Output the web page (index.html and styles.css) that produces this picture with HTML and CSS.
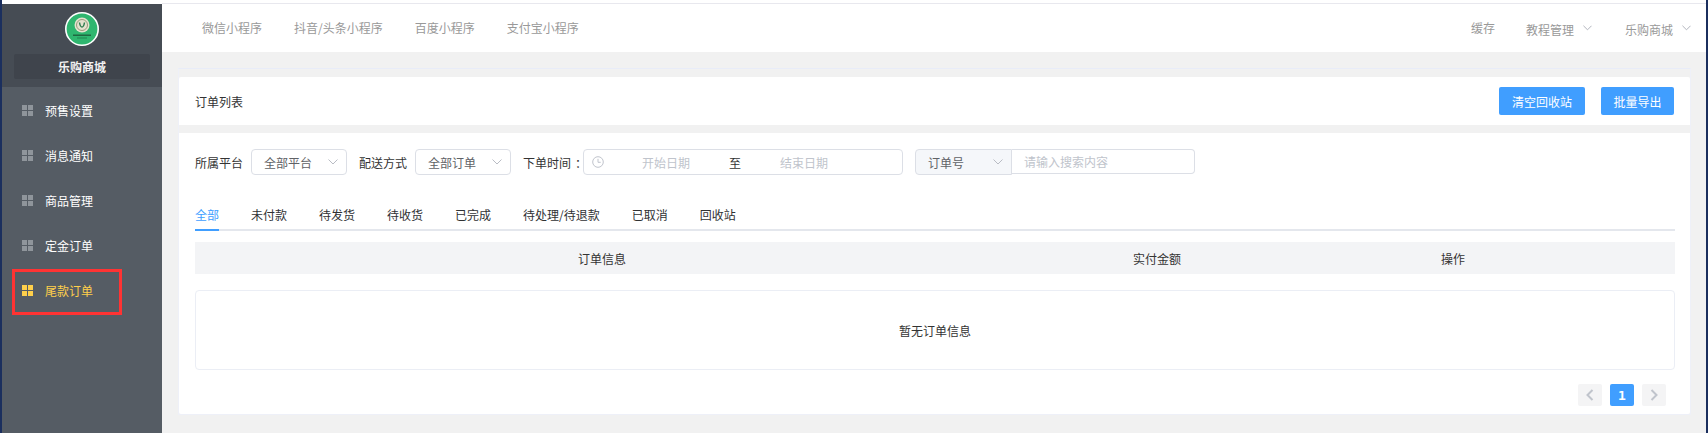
FILE: index.html
```html
<!DOCTYPE html>
<html lang="zh">
<head>
<meta charset="utf-8">
<title>尾款订单</title>
<link rel="stylesheet" href="styles.css">
</head>
<body>
<div class="app">
  <aside class="sidebar">
    <div class="brand">
      <svg class="logo" viewBox="0 0 34 34" width="34" height="34">
        <circle cx="17" cy="17" r="16.2" fill="#2fb66f" stroke="#fff" stroke-width="1.6"/>
        <circle cx="17" cy="13" r="7.500" fill="#e4e2cf"/>
        <circle cx="17" cy="13" r="5.500" fill="none" stroke="#9a9a7c" stroke-width="1"/>
        <path d="M14.500 10.500c.5 3 1.500 4.500 2.500 4.500s2-1.500 2.500-4.500" fill="none" stroke="#2f7d4f" stroke-width="1.500"/>
        <rect x="8" y="22.500" width="18" height="1.500" fill="#1c5a3a" opacity=".85"/>
        <rect x="12" y="25.500" width="10" height="1" fill="#1c7a4a" opacity=".8"/>
      </svg>
      <div class="brand-name">乐购商城</div>
    </div>
    <nav class="menu">
      <a class="menu-item"><span class="grid-icon"><i></i><i></i><i></i><i></i></span>预售设置</a>
      <a class="menu-item"><span class="grid-icon"><i></i><i></i><i></i><i></i></span>消息通知</a>
      <a class="menu-item"><span class="grid-icon"><i></i><i></i><i></i><i></i></span>商品管理</a>
      <a class="menu-item"><span class="grid-icon"><i></i><i></i><i></i><i></i></span>定金订单</a>
      <a class="menu-item active"><span class="grid-icon"><i></i><i></i><i></i><i></i></span>尾款订单<span class="annotation"></span></a>
    </nav>
  </aside>
  <main class="main">
    <header class="topbar">
      <nav class="top-links">
        <a>微信小程序</a><a>抖音/头条小程序</a><a>百度小程序</a><a>支付宝小程序</a>
      </nav>
      <div class="top-right">
        <a class="cache">缓存</a>
        <a class="drop">教程管理<svg class="chev" viewBox="0 0 10 6" width="9" height="6"><path d="M.5.5 5 5 9.500.5"/></svg></a>
        <a class="drop">乐购商城<svg class="chev" viewBox="0 0 10 6" width="9" height="6"><path d="M.5.5 5 5 9.500.5"/></svg></a>
      </div>
    </header>
    <div class="content">
      <section class="frame">
        <div class="title-card">
          <span class="title">订单列表</span>
          <div class="actions">
            <button class="btn">清空回收站</button>
            <button class="btn">批量导出</button>
          </div>
        </div>
        <div class="list-card">
          <div class="filters">
            <label class="lbl">所属平台</label>
            <div class="select"><span>全部平台</span><svg class="chev" viewBox="0 0 10 6" width="10" height="6"><path d="M.5.5 5 5 9.500.5"/></svg></div>
            <label class="lbl">配送方式</label>
            <div class="select"><span>全部订单</span><svg class="chev" viewBox="0 0 10 6" width="10" height="6"><path d="M.5.5 5 5 9.500.5"/></svg></div>
            <label class="lbl lbl-time">下单时间<span class="colon">：</span></label>
            <div class="date">
              <svg class="clock" viewBox="0 0 12 12" width="12" height="12"><circle cx="6" cy="6" r="5.300"/><path d="M6 2.800V6.300H8.700"/></svg>
              <span class="ph">开始日期</span><span class="sep">至</span><span class="ph">结束日期</span>
            </div>
            <div class="search">
              <div class="search-type"><span>订单号</span><svg class="chev" viewBox="0 0 10 6" width="10" height="6"><path d="M.5.5 5 5 9.500.5"/></svg></div>
              <div class="search-input">请输入搜索内容</div>
            </div>
          </div>
          <div class="tabs">
            <a class="tab on">全部</a><a class="tab">未付款</a><a class="tab">待发货</a><a class="tab">待收货</a><a class="tab">已完成</a><a class="tab">待处理/待退款</a><a class="tab">已取消</a><a class="tab">回收站</a>
          </div>
          <div class="thead">
            <span>订单信息</span><span>实付金额</span><span>操作</span>
          </div>
          <div class="empty">暂无订单信息</div>
          <div class="pager">
            <a class="page-btn"><svg viewBox="0 0 8 12" width="8" height="12"><path d="M6.500 1 1.500 6l5 5"/></svg></a>
            <a class="page-btn current">1</a>
            <a class="page-btn"><svg viewBox="0 0 8 12" width="8" height="12"><path d="M1.500 1l5 5-5 5"/></svg></a>
          </div>
        </div>
      </section>
    </div>
  </main>
</div>
</body>
</html>
```
FILE: styles.css
```css
* { box-sizing: border-box; }
html, body { margin: 0; padding: 0; height: 100%; }
body {
  font-family: "Noto Sans CJK SC", "Liberation Sans", sans-serif;
  font-size: 12px;
  color: #333;
  background: #fff;
  overflow: hidden;
}
a { color: inherit; text-decoration: none; }

.app {
  display: flex;
  width: 1708px;
  height: 433px;
  border-left: 2px solid #1b2f5e;
  border-right: 2px solid #1b2f5e;
  position: relative;
}

.sidebar {
  flex: 0 0 160px;
  margin-top: 4px;
  background: #555c64;
  display: flex;
  flex-direction: column;
}
.brand {
  height: 83px;
  background: #464c54;
  padding: 8px 12px 0;
  display: flex;
  flex-direction: column;
  align-items: center;
}
.logo { display: block; }
.brand-name {
  width: 136px;
  height: 25px;
  margin-top: 8px;
  background: #3f444c;
  border-radius: 2px;
  color: #f2f2f2;
  font-weight: 700;
  line-height: 25px;
  text-align: center;
}
.menu { padding-top: 1px; }
.menu-item {
  display: flex;
  align-items: center;
  height: 45px;
  padding-left: 20px;
  color: #fff;
  position: relative;
}
.grid-icon {
  display: grid;
  grid-template-columns: 5px 5px;
  grid-auto-rows: 5px;
  gap: 1px;
  width: 11px;
  margin-right: 12px;
}
.grid-icon i { background: #8f959b; }
.menu-item.active { color: #ffd04b; }
.menu-item.active .grid-icon i { background: #ffd04b; }
.annotation {
  position: absolute;
  left: 10px;
  top: 1px;
  width: 110px;
  height: 46px;
  border: 3px solid #f33;
}

.main {
  flex: 1;
  display: flex;
  flex-direction: column;
  background: #f1f1f1;
  border-top: 3px solid #fff;
  min-width: 0;
}
.topbar {
  height: 49px;
  background: #fff;
  border-top: 1px solid #e8e8ee;
  display: flex;
  justify-content: space-between;
  align-items: center;
  padding: 0 15px 0 40px;
  color: #999;
}
.top-links { display: flex; gap: 32px; padding-bottom: 2px; }
.top-right { display: flex; align-items: center; padding-top: 2px; }
.cache { margin-right: 31px; padding-bottom: 4px; }
.drop { display: flex; align-items: center; }
.drop + .drop { margin-left: 33px; }
.top-right .chev { margin-left: 9px; margin-bottom: 3px; stroke: #a9adb5; }
.chev { fill: none; stroke: #b9bcc4; stroke-width: 1; display: block; }

.content { flex: 1; padding: 16px 15px 0 16px; }
.frame {
  border: 1px solid #eef0f8;
  border-top-color: #e8ecf8;
  padding-top: 8px;
}
.title-card {
  height: 48px;
  background: #fff;
  border-radius: 2px 2px 0 0;
  display: flex;
  justify-content: space-between;
  align-items: center;
  padding: 0 16px;
}
.actions { display: flex; gap: 16px; }
.btn {
  height: 28px;
  border: 0;
  border-radius: 2px;
  padding: 0 13px;
  background: #409eff;
  color: #fff;
  font: inherit;
}
.btn + .btn { padding: 0 12.500px; }
.list-card {
  margin-top: 8px;
  height: 281px;
  background: #fff;
  border-radius: 0 0 2px 2px;
  padding: 16px 15px 0 16px;
}

.filters { display: flex; align-items: center; height: 26px; }
.lbl { margin-right: 8px; }
.lbl-time { margin-right: 0; }
.colon { display: inline-block; padding-left: 4px; margin-right: -4px; }
.select {
  width: 96px;
  height: 26px;
  border: 1px solid #dcdfe6;
  border-radius: 4px;
  display: flex;
  align-items: center;
  justify-content: space-between;
  padding: 0 8px 0 12px;
  margin-right: 12px;
  color: #606266;
}
.date {
  width: 320px;
  height: 26px;
  border: 1px solid #dcdfe6;
  border-radius: 4px;
  display: flex;
  align-items: center;
  padding-left: 8px;
  color: #c0c4cc;
  margin-right: 12px;
}
.clock { fill: none; stroke: #c0c4cc; stroke-width: 1; flex: none; }
.ph { flex: none; width: 48px; }
.date .ph:first-of-type { margin-left: 38px; }
.sep { color: #333; margin: 0 0 0 39px; }
.sep + .ph { margin-left: 39px; }
.search { display: flex; align-items: flex-start; height: 26px; }
.search-type {
  width: 97px;
  height: 26px;
  background: #f5f7fa;
  border: 1px solid #dcdfe6;
  border-radius: 4px 0 0 4px;
  display: flex;
  align-items: center;
  justify-content: space-between;
  padding: 0 8px 0 12px;
  color: #606266;
}
.search-input {
  width: 183px;
  height: 25px;
  border: 1px solid #dcdfe6;
  border-left: 0;
  border-radius: 0 4px 4px 0;
  padding-left: 12px;
  line-height: 23px;
  color: #c0c4cc;
}

.tabs {
  display: flex;
  gap: 32px;
  height: 33px;
  margin-top: 23px;
  border-bottom: 2px solid #e4e7ed;
}
.tab { height: 33px; line-height: 33px; color: #303133; }
.tab.on { color: #409eff; border-bottom: 2px solid #409eff; }

.thead {
  margin-top: 11px;
  height: 32px;
  background: #f3f4f6;
  display: grid;
  grid-template-columns: 55% 20% 20% 5%;
  align-items: center;
  text-align: center;
}
.empty {
  margin-top: 16px;
  height: 80px;
  border: 1px solid #ebeef5;
  border-radius: 4px;
  display: flex;
  align-items: center;
  justify-content: center;
}
.pager {
  display: flex;
  justify-content: flex-end;
  gap: 8px;
  margin-top: 14px;
  padding-right: 9px;
}
.page-btn {
  width: 24px;
  height: 22px;
  background: #f4f4f5;
  border-radius: 2px;
  display: flex;
  align-items: center;
  justify-content: center;
}
.page-btn svg { fill: none; stroke: #c0c4cc; stroke-width: 2; }
.page-btn.current {
  background: #409eff;
  color: #fff;
  font-weight: 700;
  font-family: "DejaVu Sans Mono", monospace;
  font-size: 13px;
}
```
